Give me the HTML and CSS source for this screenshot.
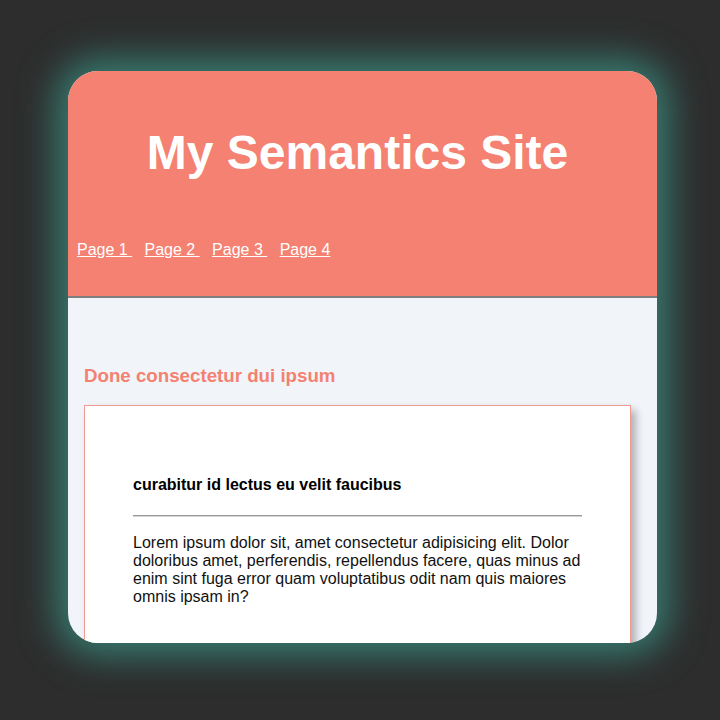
FILE: index.html
```html
<!DOCTYPE html>
<html lang="en">
<head>
<meta charset="utf-8">
<title>My Semantics Site</title>
<link rel="stylesheet" href="styles.css">
</head>
<body>
<div class="window">
  <header class="site-header">
    <h1 class="site-title">My Semantics Site</h1>
    <nav class="site-nav">
      <a href="#">Page 1 </a>
      <a href="#">Page 2 </a>
      <a href="#">Page 3 </a>
      <a href="#">Page 4</a>
    </nav>
  </header>
  <main class="content">
    <h3 class="section-title">Done consectetur dui ipsum</h3>
    <article class="card">
      <h4 class="card-title">curabitur id lectus eu velit faucibus</h4>
      <hr class="card-rule">
      <p class="card-text">Lorem ipsum dolor sit, amet consectetur adipisicing elit. Dolor doloribus amet, perferendis, repellendus facere, quas minus ad enim sint fuga error quam voluptatibus odit nam quis maiores omnis ipsam in?</p>
    </article>
  </main>
</div>
</body>
</html>
```
FILE: styles.css
```css
html, body {
  margin: 0;
  padding: 0;
}
body {
  width: 720px;
  height: 720px;
  background: #2d2d2d;
  font-family: "Liberation Sans", Arial, sans-serif;
  overflow: hidden;
}
.window {
  width: 589px;
  height: 572px;
  margin: 71px 0 0 68px;
  border-radius: 30px;
  overflow: hidden;
  background: #f1f5f9;
  box-shadow: 0 0 36px 12px rgba(58, 140, 126, 0.85);
}
.site-header {
  background: #f48171;
  border-bottom: 2px solid #7f7f7f;
  padding: 22px 19px 37px 9px;
}
.site-title {
  margin: 32px 0 61px;
  font-size: 48px;
  font-weight: bold;
  color: #fff;
  text-align: center;
}
.site-nav a {
  color: #fff;
  font-size: 16px;
  margin-right: 12.4px;
  text-decoration: underline;
}
.content {
  padding: 48px 26px 0 16px;
}
.section-title {
  margin: 18.72px 0;
  font-size: 18.72px;
  font-weight: bold;
  color: #f48171;
}
.card {
  background: #fff;
  border: 1px solid #f29a92;
  box-shadow: 5px 5px 8px rgba(0, 0, 0, 0.28);
  padding: 48px;
}
.card-title {
  margin: 21.28px 0;
  font-size: 16px;
  font-weight: bold;
  color: #000;
}
.card-rule {
  margin: 8px 0;
  border: 0;
  border-top: 1px solid #9a9a9a;
  border-bottom: 1px solid #d4d4d4;
}
.card-text {
  margin: 17px 0;
  font-size: 16px;
  color: #111;
}
```
